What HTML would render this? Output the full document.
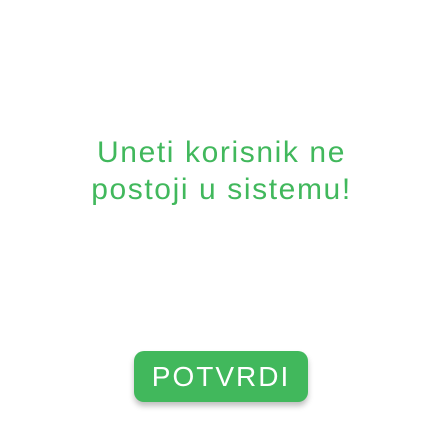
<!DOCTYPE html>
<html><head><style>
html,body{margin:0;width:443px;height:440px;background:#fff;overflow:hidden;font-family:"Liberation Sans",sans-serif}
.t{position:absolute;left:0;width:443px;top:134px;text-align:center;color:#41b85c;font-size:30px;line-height:37px;letter-spacing:1.6px}
.b{position:absolute;left:134px;top:351px;width:174px;height:51px;background:#41b85c;border-radius:10px;box-shadow:0 4px 6px rgba(0,0,0,0.25);color:#fff;font-size:28px;line-height:51px;text-align:center;letter-spacing:2px}
</style></head><body>
<div class="t">Uneti korisnik ne<br>postoji u sistemu!</div>
<div class="b">POTVRDI</div>
</body></html>
